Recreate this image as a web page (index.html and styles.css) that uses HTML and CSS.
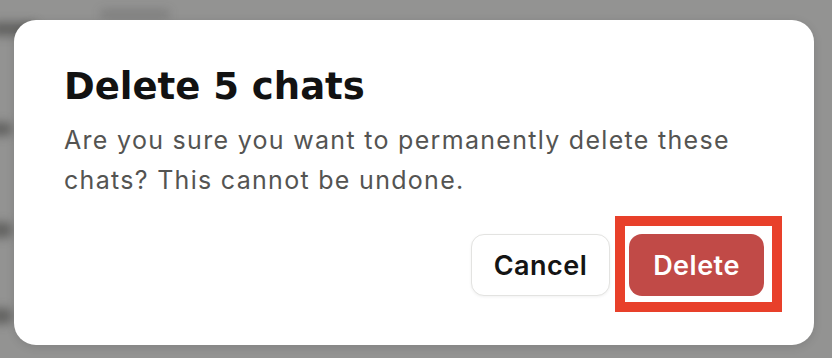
FILE: index.html
```html
<!DOCTYPE html>
<html lang="en">
<head>
<meta charset="utf-8">
<title>Delete chats</title>
<link rel="stylesheet" href="styles.css">
</head>
<body>
<div class="backdrop" aria-hidden="true">
  <span class="smudge s1"></span>
  <span class="smudge s2"></span>
  <span class="smudge s3"></span>
  <span class="smudge s4"></span>
  <span class="smudge s5"></span>
</div>
<div class="stage">
  <div class="modal" role="dialog">
    <h1 class="title">Delete 5 chats</h1>
    <p class="body">Are you sure you want to permanently delete these chats? This cannot be undone.</p>
    <div class="actions">
      <button class="btn btn-cancel">Cancel</button>
      <button class="btn btn-delete">Delete</button>
    </div>
  </div>
</div>
</body>
</html>
```
FILE: styles.css
```css
html, body {
  margin: 0;
  padding: 0;
}
body {
  width: 832px;
  height: 358px;
  overflow: hidden;
  background: #939392;
  font-family: Inter, "Noto Sans", "Liberation Sans", sans-serif;
  position: relative;
}
.backdrop {
  position: absolute;
  inset: 0;
  filter: blur(5px);
}
.smudge {
  position: absolute;
  background: #3d3d3b;
  border-radius: 6px;
  opacity: 0.55;
}
.s1 { left: -10px; top: 22px; width: 48px; height: 14px; }
.s2 { left: -10px; top: 122px; width: 22px; height: 14px; }
.s3 { left: -10px; top: 222px; width: 22px; height: 16px; }
.s4 { left: -10px; top: 308px; width: 22px; height: 16px; }
.s5 { left: 100px; top: 10px; width: 70px; height: 8px; opacity: 0.25; }
.stage {
  position: relative;
  padding: 20px 0 0 14px;
}
.modal {
  box-sizing: border-box;
  width: 800px;
  height: 325px;
  background: #ffffff;
  border-radius: 22px;
  padding: 45px 50px 49px 50px;
  display: flex;
  flex-direction: column;
  box-shadow: 0 2px 10px rgba(0,0,0,0.12);
}
.title {
  margin: 0;
  font-family: "DejaVu Sans", Inter, sans-serif;
  font-size: 37px;
  line-height: 44px;
  font-weight: 700;
  color: #121212;
}
.body {
  margin: 11px 0 0 0;
  font-size: 25px;
  line-height: 40px;
  letter-spacing: 1.3px;
  color: #545452;
  font-weight: 400;
}
.actions {
  margin-top: auto;
  display: flex;
  justify-content: flex-end;
  gap: 19px;
}
.btn {
  height: 62px;
  padding: 0;
  font-family: inherit;
  font-size: 27px;
  letter-spacing: 0.5px;
  font-weight: 600;
  border-radius: 13px;
  cursor: pointer;
}
.btn-cancel {
  width: 139px;
  background: #ffffff;
  color: #141414;
  border: 1.5px solid #e3e3e1;
  box-shadow: 0 1px 3px rgba(0,0,0,0.06);
}
.btn-delete {
  position: relative;
  width: 135px;
  background: #c14a47;
  color: #ffffff;
  border: none;
}
.btn-delete::after {
  content: "";
  position: absolute;
  top: -18px;
  right: -18px;
  bottom: -16px;
  left: -14px;
  border: 10px solid #e8402a;
  pointer-events: none;
}
```
